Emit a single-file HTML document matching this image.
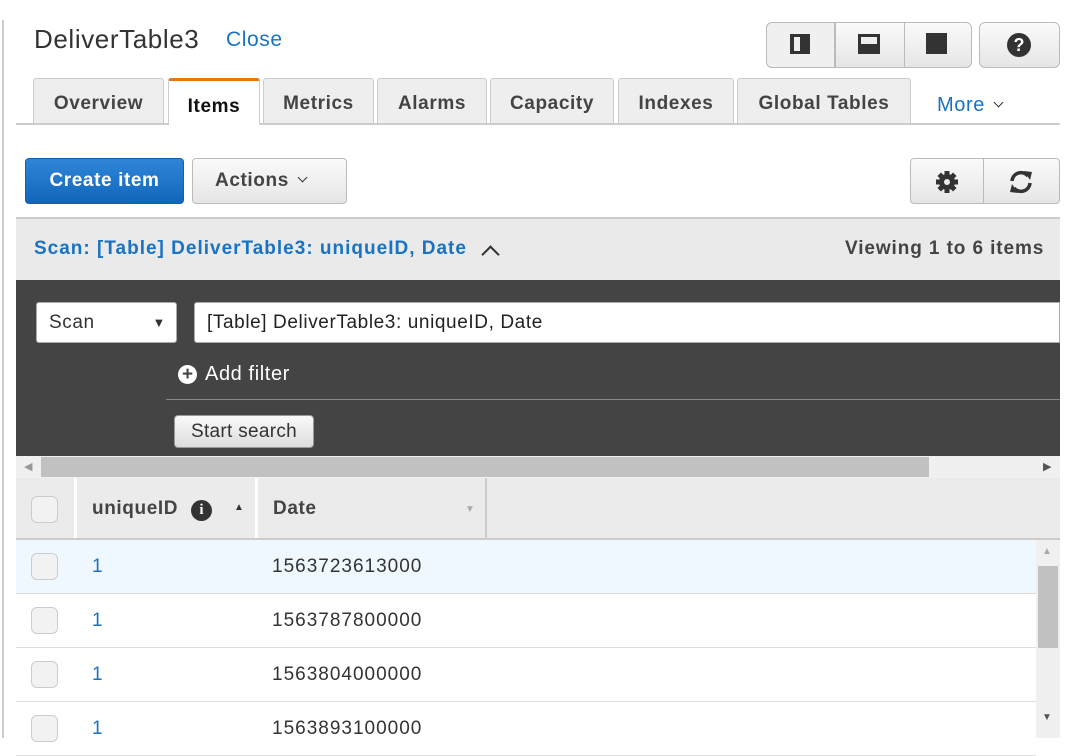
<!DOCTYPE html><html><head><style>
body{margin:0;width:1074px;height:738px;overflow:hidden;background:#fff;font-family:"Liberation Sans",sans-serif;position:relative;color:#444;letter-spacing:0.6px}
.a{position:absolute;white-space:nowrap}
.tab{position:absolute;top:78px;height:45px;background:#eee;border:1px solid #ccc;border-bottom:none;border-radius:3px 3px 0 0;font-weight:bold;font-size:19px;color:#444;text-align:center;line-height:50px;box-sizing:border-box}
.btn{position:absolute;border:1px solid #bbb;border-radius:4px;background:linear-gradient(#fafafa,#e6e6e6);box-sizing:border-box}
.cb{position:absolute;left:31px;width:27px;height:27px;border:1px solid #ccc;border-radius:6px;background:#f2f2f2;box-sizing:border-box}
.row{position:absolute;left:16px;width:1020px;height:54px;border-bottom:1px solid #ddd;box-sizing:border-box;font-size:19px}
.chev{display:inline-block;width:7px;height:7px;border-right:2px solid #333;border-bottom:2px solid #333;transform:rotate(45deg);margin-left:10px;position:relative;top:-5px}
</style></head><body>
<div class="a" style="left:2px;top:20px;width:2px;height:718px;background:#ccc"></div>
<div class="a" style="left:34px;top:24px;font-size:26px;color:#333">DeliverTable3</div>
<div class="a" style="left:226px;top:28px;font-size:21px;color:#1a73c2">Close</div>
<div class="btn" style="left:766px;top:22px;width:206px;height:46px;border-radius:6px"></div>
<div class="a" style="left:766px;top:22px;width:69px;height:46px;background:#f0f0f0;border-radius:6px 0 0 6px;border:1px solid #bbb;box-sizing:border-box"></div>
<div class="a" style="left:835px;top:23px;width:1px;height:44px;background:#bbb"></div>
<div class="a" style="left:904px;top:23px;width:1px;height:44px;background:#bbb"></div>
<div class="a" style="left:790px;top:34px;width:20px;height:20px;background:#333"></div><div class="a" style="left:794px;top:37px;width:6px;height:14px;background:#eee"></div>
<div class="a" style="left:858px;top:34px;width:22px;height:20px;background:#333"></div><div class="a" style="left:861px;top:37px;width:16px;height:7px;background:#eee"></div>
<div class="a" style="left:926px;top:33px;width:21px;height:21px;background:#333"></div>
<div class="btn" style="left:979px;top:22px;width:81px;height:46px;border-radius:6px"></div>
<div class="a" style="left:1007px;top:33px;width:24px;height:24px;border-radius:50%;background:#333;color:#fff;font-weight:bold;font-size:18px;text-align:center;line-height:24px;letter-spacing:0">?</div>
<div class="a" style="left:16px;top:123px;width:1044px;height:2px;background:#ccc"></div>
<div class="tab" style="left:33px;width:131px">Overview</div>
<div class="tab" style="left:168px;width:92px;height:47px;background:#fff;border-top:3px solid #e47911;color:#111;line-height:52px">Items</div>
<div class="tab" style="left:263px;width:111px">Metrics</div>
<div class="tab" style="left:377px;width:110px">Alarms</div>
<div class="tab" style="left:490px;width:124px">Capacity</div>
<div class="tab" style="left:618px;width:116px">Indexes</div>
<div class="tab" style="left:737px;width:174px">Global Tables</div>
<div class="a" style="left:937px;top:94px;font-size:20px;color:#1a73c2">More<span class="chev" style="width:6px;height:6px;border-width:1.5px"></span></div>
<div class="a" style="left:25px;top:158px;width:159px;height:46px;border-radius:4px;background:linear-gradient(#2f86d8,#1166bb);border:1px solid #1060b0;box-sizing:border-box;color:#fff;font-weight:bold;font-size:19px;text-align:center;line-height:44px">Create item</div>
<div class="btn" style="left:192px;top:158px;width:155px;height:46px;font-weight:bold;font-size:19px;line-height:44px;padding-left:22px;color:#444">Actions<span class="chev" style="width:6px;height:6px;border-width:1.5px"></span></div>
<div class="btn" style="left:910px;top:158px;width:150px;height:46px"></div>
<div class="a" style="left:983px;top:159px;width:1px;height:44px;background:#bbb"></div>
<svg class="a" style="left:935px;top:170px" width="24" height="24" viewBox="0 0 24 24"><g fill="#333"><circle cx="12" cy="12" r="8"/><rect x="9.5" y="1" width="5" height="22"/><rect x="1" y="9.5" width="22" height="5"/><rect x="9.5" y="1" width="5" height="22" transform="rotate(45 12 12)"/><rect x="9.5" y="1" width="5" height="22" transform="rotate(-45 12 12)"/></g><circle cx="12" cy="12" r="3" fill="#eee"/></svg>
<svg class="a" style="left:1006px;top:168px" width="30" height="28" viewBox="0 0 30 28"><path d="M6 13a9 9 0 0 1 16-5" fill="none" stroke="#333" stroke-width="3.5"/><path d="M18 3l8 1-2 8z" fill="#333"/><path d="M24 15a9 9 0 0 1-16 5" fill="none" stroke="#333" stroke-width="3.5"/><path d="M12 25l-8-1 2-8z" fill="#333"/></svg>
<div class="a" style="left:16px;top:217px;width:1044px;height:2px;background:#ccc"></div>
<div class="a" style="left:16px;top:219px;width:1044px;height:61px;background:#eaeaea"></div>
<div class="a" style="left:34px;top:238px;font-size:19px;font-weight:bold;color:#1a73c2;letter-spacing:1px">Scan: [Table] DeliverTable3: uniqueID, Date</div>
<div class="a" style="left:484px;top:248px;width:11px;height:11px;border-left:2px solid #333;border-top:2px solid #333;transform:rotate(45deg)"></div>
<div class="a" style="left:845px;top:238px;font-size:19px;font-weight:bold;color:#444;letter-spacing:0.9px">Viewing 1 to 6 items</div>
<div class="a" style="left:16px;top:280px;width:1044px;height:176px;background:#444"></div>
<div class="a" style="left:36px;top:302px;width:141px;height:41px;background:#fff;border:1px solid #aaa;border-radius:3px;box-sizing:border-box;font-size:19px;line-height:40px;padding-left:12px;color:#333">Scan<span style="position:absolute;right:10px;font-size:13px">&#9660;</span></div>
<div class="a" style="left:194px;top:302px;width:866px;height:41px;background:#fff;border:1px solid #aaa;border-radius:3px 0 0 3px;box-sizing:border-box;font-size:19px;line-height:40px;padding-left:12px;color:#222">[Table] DeliverTable3: uniqueID, Date</div>
<div class="a" style="left:178px;top:365px;width:19px;height:19px;border-radius:50%;background:#fff;color:#444;font-weight:bold;font-size:19px;line-height:19px;text-align:center;letter-spacing:0">+</div>
<div class="a" style="left:205px;top:363px;font-size:20px;color:#fff">Add filter</div>
<div class="a" style="left:166px;top:399px;width:894px;height:1px;background:#888"></div>
<div class="a" style="left:174px;top:415px;width:140px;height:33px;border-radius:4px;background:linear-gradient(#fafafa,#ddd);border:1px solid #999;box-sizing:border-box;font-size:19px;line-height:31px;text-align:center;color:#333;letter-spacing:0.3px">Start search</div>
<div class="a" style="left:16px;top:456px;width:1044px;height:22px;background:#f0f0f0"></div>
<div class="a" style="left:41px;top:457px;width:888px;height:20px;background:#c1c1c1"></div>
<div class="a" style="left:24px;top:460px;font-size:11px;color:#999">&#9664;</div>
<div class="a" style="left:1043px;top:460px;font-size:11px;color:#555">&#9654;</div>
<div class="a" style="left:16px;top:478px;width:1044px;height:62px;background:#ebebeb;border-bottom:2px solid #ccc;box-sizing:border-box"></div>
<div class="a" style="left:74px;top:478px;width:3px;height:60px;background:#fff"></div>
<div class="a" style="left:255px;top:478px;width:3px;height:60px;background:#fff"></div>
<div class="a" style="left:485px;top:478px;width:2px;height:60px;background:#ccc"></div>
<div class="cb" style="top:496px"></div>
<div class="a" style="left:92px;top:498px;font-size:19px;font-weight:bold;color:#444">uniqueID</div>
<div class="a" style="left:191px;top:500px;width:21px;height:21px;border-radius:50%;background:#333;color:#fff;font:bold 15px 'Liberation Serif';text-align:center;line-height:21px;letter-spacing:0">i</div>
<div class="a" style="left:234px;top:502px;font-size:10px;color:#333">&#9650;</div>
<div class="a" style="left:273px;top:498px;font-size:19px;font-weight:bold;color:#444">Date</div>
<div class="a" style="left:465px;top:504px;font-size:10px;color:#aaa">&#9660;</div>
<div class="row" style="top:540px;background:#f0f8ff"></div>
<div class="row" style="top:594px"></div>
<div class="row" style="top:648px"></div>
<div class="row" style="top:702px"></div>
<div class="cb" style="top:553px"></div><div class="cb" style="top:607px"></div><div class="cb" style="top:661px"></div><div class="cb" style="top:715px"></div>
<div class="a" style="left:92px;top:556px;font-size:19px;color:#1a73c2">1</div>
<div class="a" style="left:92px;top:610px;font-size:19px;color:#1a73c2">1</div>
<div class="a" style="left:92px;top:664px;font-size:19px;color:#1a73c2">1</div>
<div class="a" style="left:92px;top:718px;font-size:19px;color:#1a73c2">1</div>
<div class="a" style="left:272px;top:556px;font-size:19px;color:#333;letter-spacing:1px">1563723613000</div>
<div class="a" style="left:272px;top:610px;font-size:19px;color:#333;letter-spacing:1px">1563787800000</div>
<div class="a" style="left:272px;top:664px;font-size:19px;color:#333;letter-spacing:1px">1563804000000</div>
<div class="a" style="left:272px;top:718px;font-size:19px;color:#333;letter-spacing:1px">1563893100000</div>
<div class="a" style="left:1036px;top:540px;width:24px;height:198px;background:#f0f0f0"></div>
<div class="a" style="left:1038px;top:566px;width:20px;height:82px;background:#c1c1c1"></div>
<div class="a" style="left:1042px;top:546px;font-size:10px;color:#aaa">&#9650;</div>
<div class="a" style="left:1042px;top:712px;font-size:10px;color:#555">&#9660;</div>
</body></html>
